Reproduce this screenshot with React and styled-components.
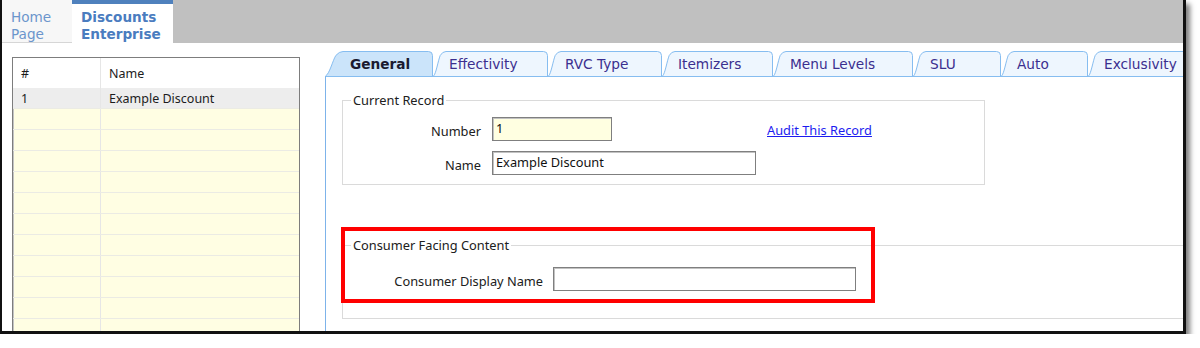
import React from 'react';
import styled, { createGlobalStyle } from 'styled-components';

const GlobalStyle = createGlobalStyle`
  html, body {
    margin: 0;
    padding: 0;
    background: #ffffff;
  }
`

const Frame = styled.div`
  box-sizing: border-box;
  width: 1186px;
  height: 334px;
  border-left: 2px solid #111;
  border-right: 3px solid #111;
  border-bottom: 3px solid #111;
  box-shadow: 4px 4px 5px rgba(0, 0, 0, 0.5);
  overflow: hidden;
  display: flex;
  flex-direction: column;
  background: #fff;
`

const TopBar = styled.div`
  display: flex;
  height: 43px;
  flex: none;
  background: #c0c0c0;
`

const AppTab = styled.div`
  box-sizing: border-box;
  width: ${p => p.$width}px;
  height: 43px;
  padding: ${p => (p.$active ? '5px' : '9px')} 0 0 9px;
  border-top: ${p => (p.$active ? '4px solid #4f81bd' : 'none')};
  border-bottom: ${p => (p.$active ? 'none' : '1px solid #d6d6d6')};
  background: ${p => (p.$active ? '#ffffff' : '#f7f7f7')};
  font-family: "DejaVu Sans", Verdana, sans-serif;
  font-size: 13.6px;
  line-height: 16.5px;
  font-weight: ${p => (p.$active ? 'bold' : 'normal')};
  color: ${p => (p.$active ? '#4a7cbf' : '#6b95cc')};
`

const Body = styled.div`
  display: flex;
  align-items: flex-start;
  flex: 1;
  overflow: hidden;
`

const Grid = styled.div`
  flex: none;
  width: 288px;
  height: 300px;
  margin: 14px 0 0 10px;
  box-sizing: border-box;
  border: 1px solid #7d7d7d;
  box-shadow: inset 1px 1px 0 #c4c4c4;
  background: #fffee3;
  font-family: "Noto Sans", "Open Sans", sans-serif;
  font-size: 12.5px;
  color: #1c1c1c;
`

const GridRow = styled.div`
  display: grid;
  grid-template-columns: 88px 1fr;
  height: ${p => (p.$header ? 30 : 21)}px;
  box-sizing: border-box;
  border-bottom: ${p => (p.$header ? 'none' : '1px solid #ebebe4')};
  background: ${p => (p.$header ? '#ffffff' : p.$selected ? '#ededed' : 'transparent')};
`

const Cell = styled.div`
  display: flex;
  align-items: center;
  padding-left: 8px;
  border-right: ${p => (p.$first ? '1px solid #e6e6e6' : 'none')};
`

const TabControl = styled.div`
  flex: none;
  width: 880px;
  margin: 8px 0 0 25px;
`

const TabStrip = styled.div`
  display: flex;
  height: 25px;
`

const Tab = styled.div`
  position: relative;
  flex: none;
  width: ${p => p.$width}px;
  height: 25px;
  box-sizing: border-box;
  padding-left: ${p => p.$pad}px;
  font-family: "DejaVu Sans", Verdana, sans-serif;
  font-size: 13.7px;
  line-height: 26px;
  font-weight: ${p => (p.$active ? 'bold' : 'normal')};
  color: ${p => (p.$active ? '#1a1a30' : '#3b2f8f')};

  svg {
    position: absolute;
    left: 0;
    top: 0;
  }
  span {
    position: relative;
  }
`

const Panel = styled.div`
  position: relative;
  height: 260px;
  box-sizing: border-box;
  border-top: 1px solid #86bdf0;
  border-left: 1px solid #7db3ea;
  padding: 15px 0 0 16px;
  font-family: "Noto Sans", "Open Sans", sans-serif;
  font-size: 12.8px;
  color: #202020;
`

const Group = styled.fieldset`
  box-sizing: border-box;
  width: ${p => p.$width}px;
  margin: ${p => p.$top}px 0 0 0;
  padding: ${p => p.$padTop}px 0 ${p => p.$padBottom}px 0;
  border: 1px solid #dadada;

  legend {
    margin-left: 8px;
    padding: 0 2px;
    line-height: 16px;
    height: 16px;
  }
`

const FormGrid = styled.div`
  display: grid;
  grid-template-columns: ${p => p.$cols};
  column-gap: ${p => p.$gap}px;
  row-gap: 10px;
  align-items: center;
`

const Label = styled.label`
  text-align: right;
  line-height: 16px;
  padding-top: 3px;
`

const Input = styled.div`
  box-sizing: border-box;
  width: ${p => p.$width}px;
  height: 24px;
  padding: 1px 3px;
  border: 1px solid #7f7f7f;
  box-shadow: inset 1px 1px 0 #c2c2c2;
  background: ${p => (p.$yellow ? '#ffffe1' : '#ffffff')};
  line-height: 18px;
  color: #111;
`

const AuditLink = styled.a`
  color: #1c1cf0;
  text-decoration: underline;
  line-height: 16px;
  padding-top: 2px;
  cursor: pointer;
`

const Highlight = styled.div`
  position: absolute;
  left: 15px;
  top: 150px;
  width: 534px;
  height: 76px;
  box-sizing: border-box;
  border: 4px solid #ff0000;
  pointer-events: none;
`

const tabs = [
  { label: 'General', width: 108, pad: 25, active: true },
  { label: 'Effectivity', width: 115, pad: 16 },
  { label: 'RVC Type', width: 114, pad: 17 },
  { label: 'Itemizers', width: 111, pad: 16 },
  { label: 'Menu Levels', width: 140, pad: 17 },
  { label: 'SLU', width: 88, pad: 17 },
  { label: 'Auto', width: 87, pad: 16 },
  { label: 'Exclusivity', width: 120, pad: 16 },
]

function TabShape({ width, active }) {
  const s = active ? 15 : 10
  const d = `M0.5 25 C ${s * 0.3} 23 ${s * 0.5} 10 ${s * 0.72} 4.5 Q ${s * 0.95} 0.5 ${s + 3} 0.5 H ${width - 4.5} Q ${width - 0.5} 0.5 ${width - 0.5} 4.5 V 25`
  return (
    <svg width={width} height={25} viewBox={`0 0 ${width} 25`}>
      <path d={d} fill={active ? '#cbe4fa' : '#eef6fe'} stroke="#86bdf0" strokeWidth="1" />
    </svg>
  )
}

const rows = Array.from({ length: 12 })

export default function App() {
  return (
    <>
      <GlobalStyle />
      <Frame>
        <TopBar>
          <AppTab $width={70}>Home<br />Page</AppTab>
          <AppTab $width={101} $active>Discounts<br />Enterprise</AppTab>
        </TopBar>
        <Body>
          <Grid>
            <GridRow $header>
              <Cell $first>#</Cell>
              <Cell>Name</Cell>
            </GridRow>
            <GridRow $selected>
              <Cell $first>1</Cell>
              <Cell>Example Discount</Cell>
            </GridRow>
            {rows.map((_, i) => (
              <GridRow key={i}>
                <Cell $first />
                <Cell />
              </GridRow>
            ))}
          </Grid>
          <TabControl>
            <TabStrip>
              {tabs.map((t) => (
                <Tab key={t.label} $width={t.width} $pad={t.pad} $active={t.active}>
                  <TabShape width={t.width} active={t.active} />
                  <span>{t.label}</span>
                </Tab>
              ))}
            </TabStrip>
            <Panel>
              <Group $width={643} $top={0} $padTop={9} $padBottom={9}>
                <legend>Current Record</legend>
                <FormGrid $cols="138px 264px auto" $gap={11}>
                  <Label>Number</Label>
                  <Input $width={120} $yellow>1</Input>
                  <AuditLink>Audit This Record</AuditLink>
                  <Label>Name</Label>
                  <Input $width={264}>Example Discount</Input>
                </FormGrid>
              </Group>
              <Group $width={860} $top={52} $padTop={14} $padBottom={27}>
                <legend>Consumer Facing Content</legend>
                <FormGrid $cols="200px 303px" $gap={10}>
                  <Label>Consumer Display Name</Label>
                  <Input $width={303} />
                </FormGrid>
              </Group>
              <Highlight />
            </Panel>
          </TabControl>
        </Body>
      </Frame>
    </>
  )
}
